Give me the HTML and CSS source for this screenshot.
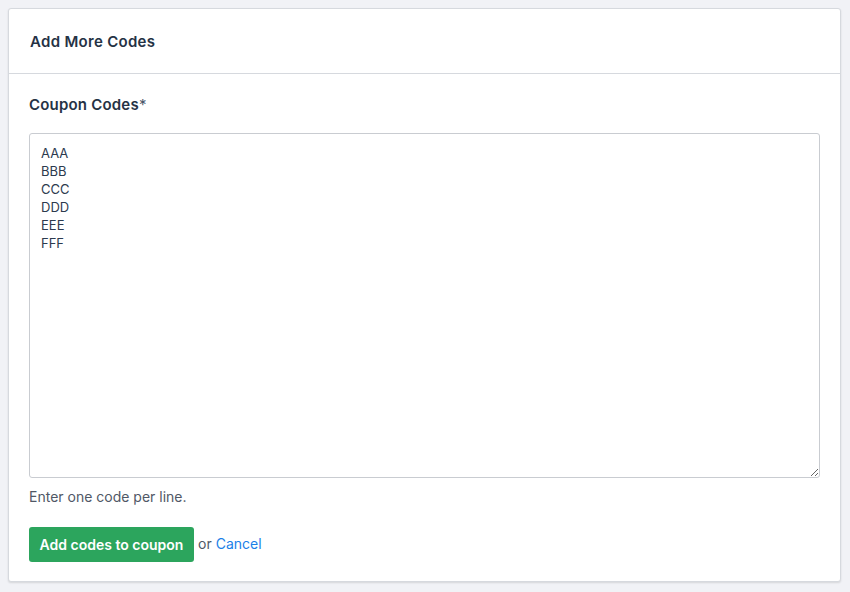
FILE: index.html
```html
<!DOCTYPE html>
<html>
<head>
<meta charset="utf-8">
<link rel="stylesheet" href="styles.css">
</head>
<body>
<div class="card">
  <div class="card-header">
    <h2 class="card-title">Add More Codes</h2>
  </div>
  <div class="card-body">
    <label class="field-label" for="codes">Coupon Codes<span class="req">*</span></label>
    <textarea id="codes" class="codes">AAA
BBB
CCC
DDD
EEE
FFF</textarea>
    <p class="hint">Enter one code per line.</p>
    <div class="actions">
      <button class="btn-primary">Add codes to coupon</button>
      <span class="or">or</span>
      <a class="cancel" href="#">Cancel</a>
    </div>
  </div>
</div>
</body>
</html>
```
FILE: styles.css
```css
html, body {
  margin: 0;
  padding: 0;
}
body {
  background: #f1f2f6;
  padding: 8px 9px 8px 8px;
  font-family: "Inter", "Lato", sans-serif;
  color: #253245;
}
.card {
  background: #fff;
  border: 1px solid #d6d9de;
  border-radius: 3px;
  box-shadow: 0 1px 2px rgba(0,0,0,0.12);
  height: 574px;
  box-sizing: border-box;
}
.card-header {
  height: 64px;
  border-bottom: 1px solid #d6d9de;
  display: flex;
  align-items: center;
  padding: 0 21px;
}
.card-title {
  margin: 0;
  font-size: 15px;
  font-weight: 600;
  letter-spacing: 0.3px;
  color: #253245;
}
.card-body {
  padding: 20px 20px;
  display: flex;
  flex-direction: column;
}
.field-label {
  font-size: 15px;
  font-weight: 600;
  letter-spacing: 0.2px;
  line-height: 22px;
  color: #253245;
  margin-bottom: 17px;
}
.req {
  font-weight: 400;
  color: #4a5568;
}
.codes {
  height: 345px;
  box-sizing: border-box;
  border: 1px solid #c9ccd1;
  border-radius: 3px;
  padding: 10px 11px;
  font-family: "Inter", "Lato", sans-serif;
  font-size: 13px;
  line-height: 18px;
  color: #2c3a4e;
  resize: vertical;
  outline: none;
}
.hint {
  margin: 9px 0 0;
  font-size: 14px;
  line-height: 20px;
  color: #505866;
}
.actions {
  margin-top: 20px;
  display: flex;
  align-items: center;
  font-size: 14px;
}
.btn-primary {
  height: 35px;
  width: 165px;
  background: #2ca55d;
  color: #fff;
  border: none;
  border-radius: 3px;
  font-family: "Inter", "Lato", sans-serif;
  font-size: 14px;
  font-weight: 600;
  padding: 0;
}
.or {
  color: #505866;
  margin-left: 4px;
  margin-right: 4px;
  padding-bottom: 3px;
}
.cancel {
  color: #1a7fe8;
  text-decoration: none;
  padding-bottom: 3px;
}
```
